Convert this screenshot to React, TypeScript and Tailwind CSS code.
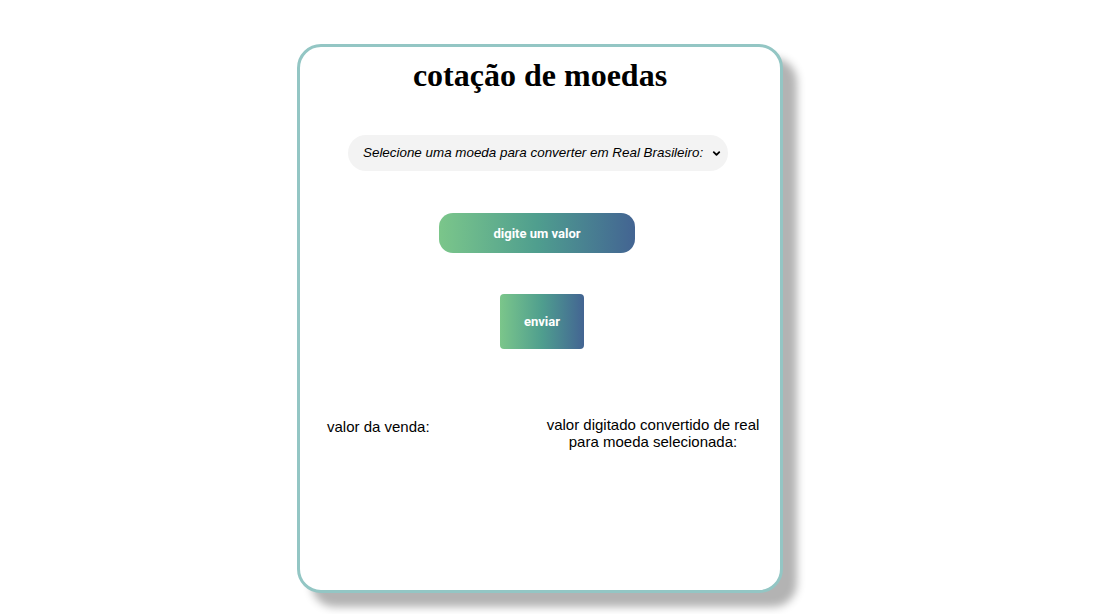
import { ChevronDown } from "lucide-react";

export default function App() {
  return (
    <div className="min-h-[614px] bg-white pt-[44px] pl-[297px]">
      <div className="flex h-[549px] w-[486px] flex-col items-center rounded-[24px] border-[3px] border-[#93c6c4] bg-white shadow-[14px_14px_8px_#b3b3b3]">
        <h1 className="mt-[10px] text-[32px] font-bold leading-[37px] text-black [font-family:'Liberation_Serif',serif]">
          cotação de moedas
        </h1>

        <div className="relative mt-[41px] mr-[4px] h-[36px] w-[380px]">
          <select className="h-full w-full appearance-none rounded-full bg-[#f3f3f3] pl-[15px] text-[13.4px] italic text-black outline-none [font-family:'Liberation_Sans',Arial,sans-serif]">
            <option>Selecione uma moeda para converter em Real Brasileiro:</option>
          </select>
          <ChevronDown
            className="pointer-events-none absolute right-[6px] top-[13px] h-[11px] w-[11px] text-black"
            strokeWidth={4}
          />
        </div>

        <button className="mt-[42px] mr-[6px] h-[40px] w-[196px] rounded-[14px] bg-gradient-to-r from-[#7bc68a] via-[#4f9e8e] to-[#436492] pt-[1px] text-[13px] font-bold text-white [font-family:Roboto,sans-serif]">
          digite um valor
        </button>

        <button className="mt-[41px] ml-[4px] h-[55px] w-[84px] rounded-[4px] bg-gradient-to-r from-[#7bc68a] via-[#4f9e8e] to-[#436492] text-[13px] font-bold text-white [font-family:Roboto,sans-serif]">
          enviar
        </button>

        <div className="mt-[67px] flex w-full items-start justify-between pl-[27px] pr-[20px] text-[15px] leading-[17px] text-black [font-family:'Liberation_Sans',Arial,sans-serif]">
          <p className="mt-[2px]">valor da venda:</p>
          <p className="w-[214px] text-center">
            valor digitado convertido de real
            <br />
            para moeda selecionada:
          </p>
        </div>
      </div>
    </div>
  );
}
